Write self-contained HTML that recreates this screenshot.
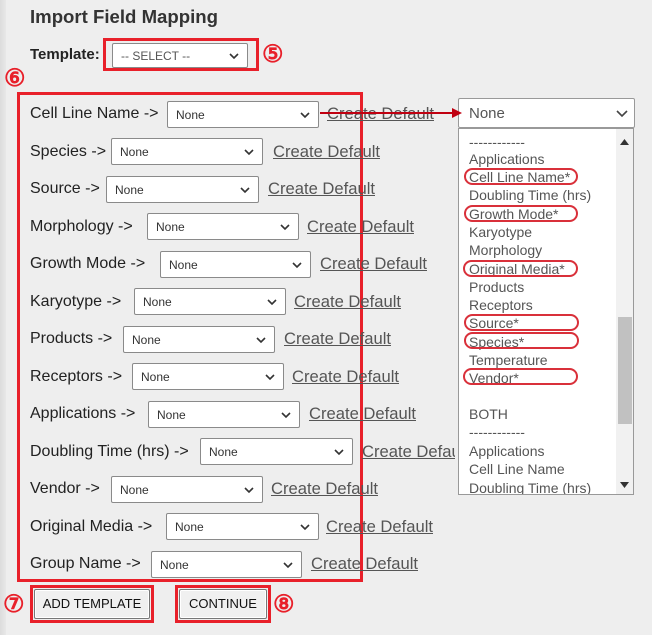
<!DOCTYPE html>
<html><head><meta charset="utf-8">
<style>
*{box-sizing:border-box;margin:0;padding:0}
body{width:652px;height:635px;overflow:hidden;background:#eeeeee;font-family:"Liberation Sans",Arial,sans-serif;position:relative;color:#222}
.strip{position:absolute;left:0;top:0;width:6px;height:635px;background:linear-gradient(90deg,#dcdcdc,#e8e8e8)}
.abs{position:absolute}
h1{position:absolute;left:30px;top:6px;font-size:18.6px;font-weight:bold;color:#333}
.lbl{position:absolute;font-size:16px;color:#222;white-space:nowrap;line-height:18px;margin-top:1px}
.sel{position:absolute;height:27px;background:#fff;border:1px solid #8a8a8a;border-radius:2px;font-size:12px;color:#333;padding:6px 0 0 8px}
.sel svg{position:absolute;right:8px;top:10px}
.cd{position:absolute;font-size:16.6px;color:#555;text-decoration:underline;white-space:nowrap;line-height:18px;margin-top:1px}
.red{position:absolute;border:3px solid #e8202a}
.num{position:absolute;color:#e8202a;font-weight:bold;font-size:24px;line-height:24px}
.btn{position:absolute;height:28px;background:#f0f0f0;border:1px solid #777;border-radius:2px;font-size:13px;color:#111;text-align:center;line-height:26px;box-shadow:inset 0 0 0 1px #fff}
.dd{position:absolute;left:458px;top:128px;width:176px;height:367px;background:#fff;border:1px solid #999;overflow:hidden;z-index:5}
.dd div{position:absolute;left:10px;font-size:14px;color:#555;white-space:nowrap;line-height:16px}
.ov{position:absolute;border:2px solid #d9303a;border-radius:9px;z-index:6}
</style></head><body>
<div class="strip"></div>
<h1>Import Field Mapping</h1>
<div class="lbl" style="left:30px;top:45px;font-weight:bold;color:#222;font-size:15px">Template:</div>
<div class="sel" style="left:112px;top:43px;width:136px;height:25px;font-size:12px;color:#555;padding-top:5px">-- SELECT --<svg width="10" height="7" viewBox="0 0 10 7" style="top:9px"><path d="M1 1l4 4 4-4" stroke="#333" stroke-width="1.6" fill="none"/></svg></div>
<div class="red" style="left:103px;top:38px;width:156px;height:33px"></div>
<div class="num" style="left:262px;top:43px">⑤</div>
<div class="num" style="left:4px;top:67px">⑥</div>
<div class="red" style="left:17px;top:92px;width:346px;height:490px"></div>

<div class="lbl" style="left:30px;top:104px">Cell Line Name -&gt;</div><div class="sel" style="left:167px;top:101px;width:152px">None<svg width="10" height="7" viewBox="0 0 10 7"><path d="M1 1l4 4 4-4" stroke="#333" stroke-width="1.6" fill="none"/></svg></div><div class="cd" style="left:327px;top:104px">Create Default</div>
<div class="lbl" style="left:30px;top:142px">Species -&gt;</div><div class="sel" style="left:111px;top:138px;width:152px">None<svg width="10" height="7" viewBox="0 0 10 7"><path d="M1 1l4 4 4-4" stroke="#333" stroke-width="1.6" fill="none"/></svg></div><div class="cd" style="left:273px;top:142px">Create Default</div>
<div class="lbl" style="left:30px;top:179px">Source -&gt;</div><div class="sel" style="left:106px;top:176px;width:153px">None<svg width="10" height="7" viewBox="0 0 10 7"><path d="M1 1l4 4 4-4" stroke="#333" stroke-width="1.6" fill="none"/></svg></div><div class="cd" style="left:268px;top:179px">Create Default</div>
<div class="lbl" style="left:30px;top:217px">Morphology -&gt;</div><div class="sel" style="left:147px;top:213px;width:152px">None<svg width="10" height="7" viewBox="0 0 10 7"><path d="M1 1l4 4 4-4" stroke="#333" stroke-width="1.6" fill="none"/></svg></div><div class="cd" style="left:307px;top:217px">Create Default</div>
<div class="lbl" style="left:30px;top:254px">Growth Mode -&gt;</div><div class="sel" style="left:160px;top:251px;width:151px">None<svg width="10" height="7" viewBox="0 0 10 7"><path d="M1 1l4 4 4-4" stroke="#333" stroke-width="1.6" fill="none"/></svg></div><div class="cd" style="left:320px;top:254px">Create Default</div>
<div class="lbl" style="left:30px;top:292px">Karyotype -&gt;</div><div class="sel" style="left:134px;top:288px;width:152px">None<svg width="10" height="7" viewBox="0 0 10 7"><path d="M1 1l4 4 4-4" stroke="#333" stroke-width="1.6" fill="none"/></svg></div><div class="cd" style="left:294px;top:292px">Create Default</div>
<div class="lbl" style="left:30px;top:329px">Products -&gt;</div><div class="sel" style="left:123px;top:326px;width:152px">None<svg width="10" height="7" viewBox="0 0 10 7"><path d="M1 1l4 4 4-4" stroke="#333" stroke-width="1.6" fill="none"/></svg></div><div class="cd" style="left:284px;top:329px">Create Default</div>
<div class="lbl" style="left:30px;top:367px">Receptors -&gt;</div><div class="sel" style="left:132px;top:363px;width:152px">None<svg width="10" height="7" viewBox="0 0 10 7"><path d="M1 1l4 4 4-4" stroke="#333" stroke-width="1.6" fill="none"/></svg></div><div class="cd" style="left:292px;top:367px">Create Default</div>
<div class="lbl" style="left:30px;top:404px">Applications -&gt;</div><div class="sel" style="left:148px;top:401px;width:152px">None<svg width="10" height="7" viewBox="0 0 10 7"><path d="M1 1l4 4 4-4" stroke="#333" stroke-width="1.6" fill="none"/></svg></div><div class="cd" style="left:309px;top:404px">Create Default</div>
<div class="lbl" style="left:30px;top:442px">Doubling Time (hrs) -&gt;</div><div class="sel" style="left:200px;top:438px;width:153px">None<svg width="10" height="7" viewBox="0 0 10 7"><path d="M1 1l4 4 4-4" stroke="#333" stroke-width="1.6" fill="none"/></svg></div><div class="cd" style="left:362px;top:442px">Create Default</div>
<div class="lbl" style="left:30px;top:479px">Vendor -&gt;</div><div class="sel" style="left:111px;top:476px;width:152px">None<svg width="10" height="7" viewBox="0 0 10 7"><path d="M1 1l4 4 4-4" stroke="#333" stroke-width="1.6" fill="none"/></svg></div><div class="cd" style="left:271px;top:479px">Create Default</div>
<div class="lbl" style="left:30px;top:517px">Original Media -&gt;</div><div class="sel" style="left:166px;top:513px;width:153px">None<svg width="10" height="7" viewBox="0 0 10 7"><path d="M1 1l4 4 4-4" stroke="#333" stroke-width="1.6" fill="none"/></svg></div><div class="cd" style="left:326px;top:517px">Create Default</div>
<div class="lbl" style="left:30px;top:554px">Group Name -&gt;</div><div class="sel" style="left:151px;top:551px;width:151px">None<svg width="10" height="7" viewBox="0 0 10 7"><path d="M1 1l4 4 4-4" stroke="#333" stroke-width="1.6" fill="none"/></svg></div><div class="cd" style="left:311px;top:554px">Create Default</div>

<div class="abs" style="left:455px;top:436px;width:4px;height:30px;background:#eeeeee;z-index:4"></div>

<div class="abs" style="left:458px;top:98px;width:177px;height:30px;background:#fff;border:1px solid #999;border-radius:2px;font-size:15px;color:#555;padding:6px 0 0 10px;z-index:5">None<svg width="12" height="8" viewBox="0 0 12 8" style="position:absolute;right:6px;top:11px"><path d="M1 1l5 5 5-5" stroke="#444" stroke-width="1.6" fill="none"/></svg></div>
<div class="dd">
<div style="top:5px">------------</div>
<div style="top:22px">Applications</div>
<div style="top:40px">Cell Line Name*</div>
<div style="top:58px">Doubling Time (hrs)</div>
<div style="top:77px">Growth Mode*</div>
<div style="top:95px">Karyotype</div>
<div style="top:113px">Morphology</div>
<div style="top:132px">Original Media*</div>
<div style="top:150px">Products</div>
<div style="top:168px">Receptors</div>
<div style="top:186px">Source*</div>
<div style="top:205px">Species*</div>
<div style="top:223px">Temperature</div>
<div style="top:241px">Vendor*</div>
<div style="top:277px">BOTH</div>
<div style="top:295px">------------</div>
<div style="top:314px">Applications</div>
<div style="top:332px">Cell Line Name</div>
<div style="top:351px">Doubling Time (hrs)</div>
<span style="position:absolute;left:157px;top:0;width:17px;height:367px;background:#f1f1f1"></span>
<span style="position:absolute;left:159px;top:188px;width:14px;height:107px;background:#c1c1c1"></span>
<svg style="position:absolute;left:161px;top:10px" width="9" height="6"><path d="M0 6L4.5 0 9 6z" fill="#333"/></svg>
<svg style="position:absolute;left:161px;top:353px" width="9" height="6"><path d="M0 0L4.5 6 9 0z" fill="#333"/></svg>
</div>
<div class="ov" style="left:464px;top:168px;width:114px;height:17px"></div>
<div class="ov" style="left:464px;top:205px;width:114px;height:17px"></div>
<div class="ov" style="left:463px;top:260px;width:115px;height:17px"></div>
<div class="ov" style="left:464px;top:314px;width:115px;height:17px"></div>
<div class="ov" style="left:464px;top:332px;width:115px;height:17px"></div>
<div class="ov" style="left:463px;top:368px;width:115px;height:17px"></div>

<div class="abs" style="left:320px;top:112px;width:134px;height:2px;background:#c00010;z-index:7"></div>
<svg class="abs" style="left:452px;top:108px;z-index:7" width="10" height="10"><path d="M0 0L10 5 0 10z" fill="#c00010"/></svg>

<div class="num" style="left:3px;top:593px">⑦</div>
<div class="red" style="left:30px;top:585px;width:124px;height:38px"></div>
<div class="btn" style="left:34px;top:589px;width:116px;height:30px;line-height:28px">ADD TEMPLATE</div>
<div class="red" style="left:175px;top:585px;width:96px;height:38px"></div>
<div class="btn" style="left:179px;top:589px;width:88px;height:30px;line-height:28px">CONTINUE</div>
<div class="num" style="left:273px;top:593px">⑧</div>
</body></html>
